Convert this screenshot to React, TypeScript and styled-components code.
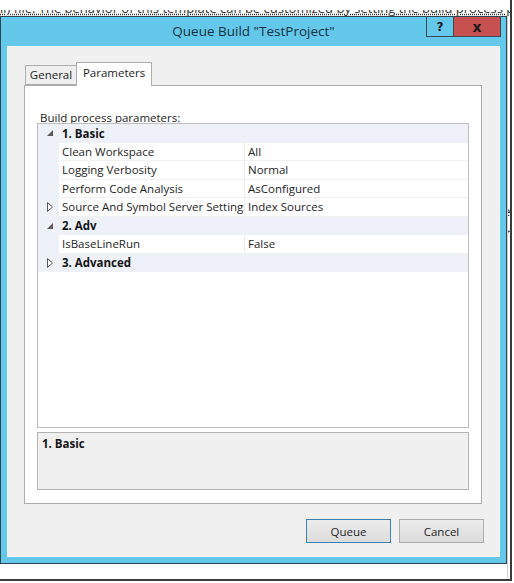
import React from "react";
import styled, { createGlobalStyle } from "styled-components";

const Global = createGlobalStyle`
  html, body { margin: 0; padding: 0; background: #ffffff; }
  body { font-family: "Open Sans", "Noto Sans", sans-serif; }
  * { box-sizing: border-box; }
`;

const Frame = styled.div`
  width: 512px;
  height: 581px;
  border-right: 2px solid #3a3a3a;
  border-bottom: 2px solid #3a3a3a;
  background: #ffffff;
  display: flex;
  flex-direction: column;
  overflow: hidden;
`;

const PageStrip = styled.div`
  height: 16px;
  overflow: hidden;
  white-space: nowrap;
`;

const PageText = styled.div`
  margin-top: 1px;
  font-family: "Open Sans", "Noto Sans", sans-serif;
  font-size: 13px;
  line-height: 15px;
  color: #333;
  text-decoration: underline;
  text-decoration-style: dotted;
  clip-path: inset(9px 0 0 0);
`;

const Body = styled.div`
  display: flex;
  align-items: flex-start;
`;

const Dialog = styled.div`
  width: 507px;
  height: 548px;
  border: 1px solid #2e4450;
  background: #64c8ea;
  display: flex;
  flex-direction: column;
  padding: 0 6px 6px;
`;

const TitleBar = styled.div`
  height: 29px;
  display: grid;
  grid-template-columns: 1fr auto 1fr;
  align-items: start;
`;

const Title = styled.div`
  grid-column: 2;
  font-family: "Open Sans", "Noto Sans", sans-serif;
  font-size: 13.5px;
  line-height: 29px;
  color: #14323f;
`;

const Controls = styled.div`
  grid-column: 3;
  justify-self: end;
  display: flex;
  margin-right: -1px;
`;

const CtrlButton = styled.div<{ $close?: boolean }>`
  width: ${(p) => (p.$close ? "47px" : "28px")};
  height: 20px;
  background: ${(p) => (p.$close ? "#c75050" : "#64c8ea")};
  border: 1px solid #3b4a50;
  border-top: none;
  border-left-width: ${(p) => (p.$close ? "0" : "1px")};
  display: flex;
  align-items: center;
  justify-content: center;
  font-family: "DejaVu Sans", sans-serif;
  font-weight: bold;
  font-size: ${(p) => (p.$close ? "14px" : "12px")};
  color: #1a1a1a;
`;

const Client = styled.div`
  flex: 1;
  background: #f0f0f0;
  border: 1px solid #f7f7f7;
  padding: 15px 15px 0 16px;
  display: flex;
  flex-direction: column;
`;

const TabStrip = styled.div`
  display: flex;
  align-items: flex-end;
  padding-left: 1px;
  height: 23px;
  position: relative;
  z-index: 1;
`;

const Tab = styled.div<{ $active?: boolean; $w: number }>`
  width: ${(p) => p.$w}px;
  height: ${(p) => (p.$active ? "24px" : "20px")};
  margin-bottom: ${(p) => (p.$active ? "-1px" : "0")};
  background: ${(p) => (p.$active ? "#ffffff" : "#efefef")};
  border: 1px solid #acacac;
  border-bottom: ${(p) => (p.$active ? "none" : "1px solid #acacac")};
  border-right-width: ${(p) => (p.$active ? "1px" : "0")};
  font-size: 11.5px;
  color: #1e1e1e;
  display: flex;
  justify-content: center;
  padding-top: ${(p) => (p.$active ? "2px" : "1px")};
  line-height: 16px;
`;

const Panel = styled.div`
  height: 419px;
  margin-right: 2px;
  background: #ffffff;
  border: 1px solid #acacac;
  padding: 25px 12px 13px 12px;
  display: flex;
  flex-direction: column;
`;

const PanelLabel = styled.div`
  height: 12px;
  line-height: 13px;
  padding-left: 3px;
  font-size: 11.5px;
  color: #1e1e1e;
`;

const Grid = styled.div`
  height: 305px;
  border: 1px solid #bdbdbd;
  background: #ffffff;
  display: flex;
  flex-direction: column;
`;

const CategoryRow = styled.div`
  height: 18.5px;
  flex: 0 0 18.5px;
  background: #eef2f8;
  display: grid;
  grid-template-columns: 21px 1fr;
  align-items: center;
`;

const Gutter = styled.div`
  display: flex;
  align-items: center;
  justify-content: center;
  padding-left: 3px;
  height: 100%;
`;

const CategoryText = styled.div`
  padding-left: 3px;
  font-weight: 700;
  font-size: 11.5px;
  color: #141414;
  white-space: nowrap;
`;

const PropRow = styled.div`
  height: 18.5px;
  flex: 0 0 18.5px;
  display: grid;
  grid-template-columns: 21px 185px 1fr;
  background: #eef2f8;
`;

const Cell = styled.div<{ $value?: boolean }>`
  background: #ffffff;
  border-bottom: 1px solid #f0f0f0;
  border-left: ${(p) => (p.$value ? "1px solid #ececec" : "none")};
  padding-left: 3px;
  font-size: 11.5px;
  line-height: 17px;
  color: #1e1e1e;
  white-space: nowrap;
  overflow: hidden;
`;

const DescBox = styled.div`
  margin-top: 4px;
  height: 58px;
  border: 1px solid #b4b4b4;
  background: #f0f0f0;
  padding: 3px 4px;
  font-weight: 700;
  font-size: 11.5px;
  line-height: 16px;
  color: #141414;
`;

const ButtonRow = styled.div`
  display: flex;
  justify-content: flex-end;
  gap: 8px;
  margin-top: 15px;
`;

const Button = styled.div<{ $default?: boolean }>`
  width: 85px;
  height: 24px;
  border: 1px solid ${(p) => (p.$default ? "#3c7fb1" : "#adadad")};
  background: linear-gradient(#ececec, #dcdcdc);
  display: flex;
  align-items: center;
  justify-content: center;
  font-size: 11.5px;
  color: #1e1e1e;
`;

const RightStrip = styled.div`
  width: 3px;
  height: 563px;
  overflow: hidden;
  border-left: 1px solid #cfcfcf;
  display: flex;
  flex-direction: column;
  font-family: "Open Sans", sans-serif;
  font-size: 13px;
  color: #222;
`;

const Fragment = styled.div<{ $top: number }>`
  margin-top: ${(p) => p.$top}px;
  margin-left: -5px;
  line-height: 14px;
`;

const Expanded = () => (
  <svg width="6" height="6" viewBox="0 0 6 6">
    <path d="M6 0 L6 6 L0 6 Z" fill="#595959" />
  </svg>
);

const Collapsed = () => (
  <svg width="6" height="10" viewBox="0 0 6 10">
    <path d="M0.5 0.5 L5.5 5 L0.5 9.5 Z" fill="#ffffff" stroke="#595959" strokeWidth="1" />
  </svg>
);

type Item =
  | { kind: "cat"; label: string; open: boolean }
  | { kind: "prop"; name: string; value: string; expandable?: boolean };

const items: Item[] = [
  { kind: "cat", label: "1. Basic", open: true },
  { kind: "prop", name: "Clean Workspace", value: "All" },
  { kind: "prop", name: "Logging Verbosity", value: "Normal" },
  { kind: "prop", name: "Perform Code Analysis", value: "AsConfigured" },
  { kind: "prop", name: "Source And Symbol Server Settings", value: "Index Sources", expandable: true },
  { kind: "cat", label: "2. Adv", open: true },
  { kind: "prop", name: "IsBaseLineRun", value: "False" },
  { kind: "cat", label: "3. Advanced", open: false },
];

export default function App() {
  return (
    <>
      <Global />
      <Frame>
        <PageStrip>
          <PageText>
            ll) file. The behavior of this template can be customized by setting the build process parameters
          </PageText>
        </PageStrip>
        <Body>
          <Dialog>
            <TitleBar>
              <Title>Queue Build "TestProject"</Title>
              <Controls>
                <CtrlButton>?</CtrlButton>
                <CtrlButton $close>x</CtrlButton>
              </Controls>
            </TitleBar>
            <Client>
              <TabStrip>
                <Tab $w={51}>General</Tab>
                <Tab $w={76} $active>
                  Parameters
                </Tab>
              </TabStrip>
              <Panel>
                <PanelLabel>Build process parameters:</PanelLabel>
                <Grid>
                  {items.map((it, i) =>
                    it.kind === "cat" ? (
                      <CategoryRow key={i}>
                        <Gutter>{it.open ? <Expanded /> : <Collapsed />}</Gutter>
                        <CategoryText>{it.label}</CategoryText>
                      </CategoryRow>
                    ) : (
                      <PropRow key={i}>
                        <Gutter>{it.expandable ? <Collapsed /> : null}</Gutter>
                        <Cell>{it.name}</Cell>
                        <Cell $value>{it.value}</Cell>
                      </PropRow>
                    )
                  )}
                </Grid>
                <DescBox>1. Basic</DescBox>
              </Panel>
              <ButtonRow>
                <Button $default>Queue</Button>
                <Button>Cancel</Button>
              </ButtonRow>
            </Client>
          </Dialog>
          <RightStrip>
            <Fragment $top={152}>t</Fragment>
            <Fragment $top={22}>e</Fragment>
            <Fragment $top={6}>&gt;</Fragment>
          </RightStrip>
        </Body>
      </Frame>
    </>
  );
}
